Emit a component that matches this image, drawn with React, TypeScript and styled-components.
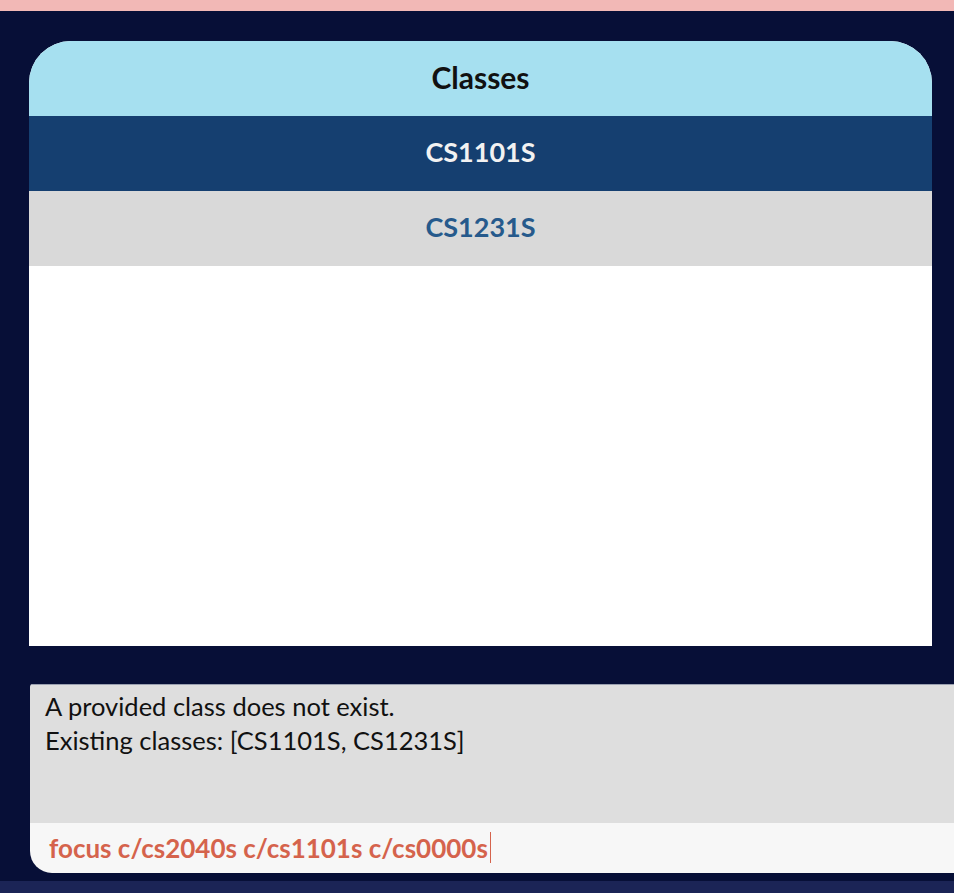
import React from "react";
import styled, { createGlobalStyle } from "styled-components";

const GlobalStyle = createGlobalStyle`
  html, body {
    margin: 0;
    padding: 0;
    background: #070f37;
    font-family: Lato, "Open Sans", sans-serif;
    overflow: hidden;
  }
  #root {
    width: 954px;
    height: 893px;
  }
`;

const Page = styled.div`
  width: 954px;
  height: 893px;
  display: flex;
  flex-direction: column;
  background: #070f37;
  overflow: hidden;
`;

const TopBar = styled.div`
  height: 11px;
  flex: none;
  background: #f2b8b6;
`;

const Main = styled.div`
  flex: 1;
  display: flex;
  flex-direction: column;
  padding: 30px 0 0 29px;
`;

const Card = styled.div`
  width: 903px;
  display: flex;
  flex-direction: column;
  border-radius: 42px 42px 0 0;
  overflow: hidden;
  background: #ffffff;
`;

const Row = styled.div<{ $bg: string; $color: string; $size: number }>`
  height: 75px;
  box-sizing: border-box;
  padding-bottom: 4px;
  display: flex;
  align-items: center;
  justify-content: center;
  background: ${(p) => p.$bg};
  color: ${(p) => p.$color};
  font-weight: 700;
  font-size: ${(p) => p.$size}px;
`;

const ListBody = styled.div`
  height: 380px;
  background: #ffffff;
`;

const Console = styled.div`
  margin-top: 38px;
  margin-left: 1px;
  width: 940px;
  display: flex;
  flex-direction: column;
  border-radius: 3px 0 0 22px;
  overflow: hidden;
`;

const ResultBox = styled.div`
  height: 139px;
  box-sizing: border-box;
  background: #dedede;
  border-top: 1px solid #9aa0b0;
  padding: 4px 15px;
  color: #111111;
  font-size: 25.5px;
  line-height: 34px;
`;

const CommandBox = styled.div`
  height: 50px;
  box-sizing: border-box;
  padding-bottom: 1px;
  background: #f7f7f7;
  display: flex;
  align-items: center;
  padding-left: 19px;
  color: #d5634c;
  font-weight: 700;
  font-size: 26px;
`;

const Caret = styled.span`
  display: inline-block;
  width: 1px;
  height: 31px;
  background: #d5634c;
  margin-left: 2px;
`;

const Footer = styled.div`
  margin-top: 8px;
  height: 12px;
  background: #1b2456;
`;

export default function App() {
  return (
    <>
      <GlobalStyle />
      <Page>
        <TopBar />
        <Main>
          <Card>
            <Row $bg="#a6e0f0" $color="#111111" $size={30}>Classes</Row>
            <Row $bg="#153f70" $color="#f2f2f2" $size={27}>CS1101S</Row>
            <Row $bg="#d9d9d9" $color="#265a8c" $size={27}>CS1231S</Row>
            <ListBody />
          </Card>
          <Console>
            <ResultBox>
              A provided class does not exist.
              <br />
              Existing classes: [CS1101S, CS1231S]
            </ResultBox>
            <CommandBox>
              focus c/cs2040s c/cs1101s c/cs0000s
              <Caret />
            </CommandBox>
          </Console>
        </Main>
        <Footer />
      </Page>
    </>
  );
}
